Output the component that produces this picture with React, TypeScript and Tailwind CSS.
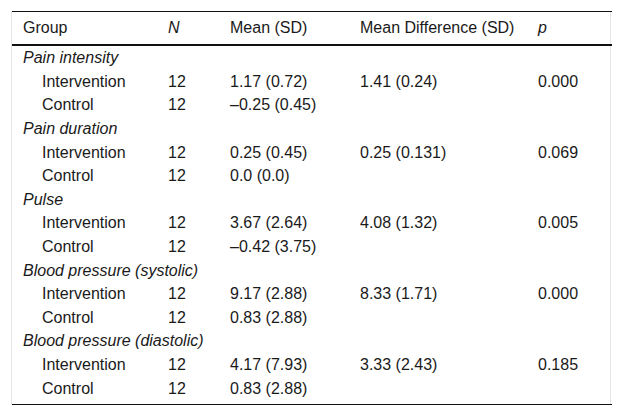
import { Fragment } from 'react';

const groups = [
  {
    label: 'Pain intensity',
    rows: [
      ['Intervention', '12', '1.17 (0.72)', '1.41 (0.24)', '0.000'],
      ['Control', '12', '–0.25 (0.45)', '', ''],
    ],
  },
  {
    label: 'Pain duration',
    rows: [
      ['Intervention', '12', '0.25 (0.45)', '0.25 (0.131)', '0.069'],
      ['Control', '12', '0.0 (0.0)', '', ''],
    ],
  },
  {
    label: 'Pulse',
    rows: [
      ['Intervention', '12', '3.67 (2.64)', '4.08 (1.32)', '0.005'],
      ['Control', '12', '–0.42 (3.75)', '', ''],
    ],
  },
  {
    label: 'Blood pressure (systolic)',
    rows: [
      ['Intervention', '12', '9.17 (2.88)', '8.33 (1.71)', '0.000'],
      ['Control', '12', '0.83 (2.88)', '', ''],
    ],
  },
  {
    label: 'Blood pressure (diastolic)',
    rows: [
      ['Intervention', '12', '4.17 (7.93)', '3.33 (2.43)', '0.185'],
      ['Control', '12', '0.83 (2.88)', '', ''],
    ],
  },
];

const cellClass = 'pl-[11px] p-0 text-left font-normal whitespace-nowrap';

export default function App() {
  return (
    <div className="w-[622px] h-[415px] bg-white pt-[11px] px-[11px] font-['Liberation_Sans',Arial,sans-serif] text-[16px] leading-[18px] text-[#1a1a1a]">
      <div className="border-x border-[#e6e6e6]">
        <table className="w-[600px] table-fixed border-collapse">
          <colgroup>
            <col className="w-[145px]" />
            <col className="w-[62px]" />
            <col className="w-[130px]" />
            <col className="w-[178px]" />
            <col className="w-[85px]" />
          </colgroup>
          <thead>
            <tr className="h-[33px] border-t border-b-2 border-[#111]">
              <th className={cellClass}>Group</th>
              <th className={cellClass + ' italic'}>N</th>
              <th className={cellClass}>Mean (SD)</th>
              <th className={cellClass}>Mean Difference (SD)</th>
              <th className={cellClass + ' italic'}>p</th>
            </tr>
          </thead>
          <tbody className="border-b border-[#111]">
            <tr className="h-[2px]">
              <td colSpan={5} />
            </tr>
            {groups.map((g) => (
              <Fragment key={g.label}>
                <tr className="h-[23.6px]">
                  <td colSpan={5} className={cellClass + ' italic'}>
                    {g.label}
                  </td>
                </tr>
                {g.rows.map((r) => (
                  <tr key={r[0]} className="h-[23.6px]">
                    <td className="pl-[30px] whitespace-nowrap">{r[0]}</td>
                    <td className={cellClass}>{r[1]}</td>
                    <td className={cellClass}>{r[2]}</td>
                    <td className={cellClass}>{r[3]}</td>
                    <td className={cellClass}>{r[4]}</td>
                  </tr>
                ))}
              </Fragment>
            ))}
            <tr className="h-[4px]">
              <td colSpan={5} />
            </tr>
          </tbody>
        </table>
      </div>
    </div>
  );
}
